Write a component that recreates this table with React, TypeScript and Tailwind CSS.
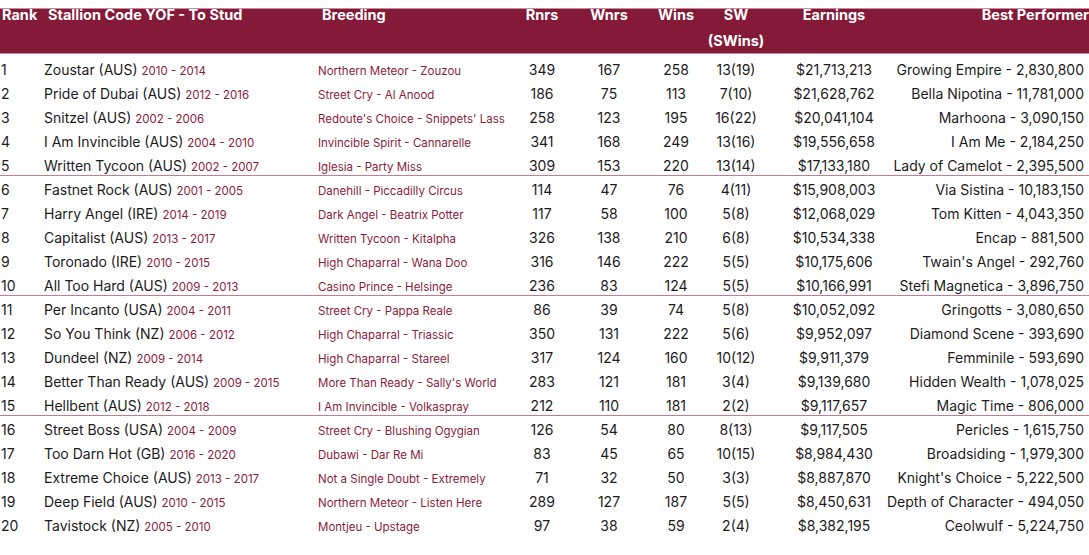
const rows = [
  ['1', 'Zoustar (AUS)', '2010 - 2014', 'Northern Meteor - Zouzou', '349', '167', '258', '13(19)', '$21,713,213', 'Growing Empire - 2,830,800'],
  ['2', 'Pride of Dubai (AUS)', '2012 - 2016', 'Street Cry - Al Anood', '186', '75', '113', '7(10)', '$21,628,762', 'Bella Nipotina - 11,781,000'],
  ['3', 'Snitzel (AUS)', '2002 - 2006', "Redoute's Choice - Snippets' Lass", '258', '123', '195', '16(22)', '$20,041,104', 'Marhoona - 3,090,150'],
  ['4', 'I Am Invincible (AUS)', '2004 - 2010', 'Invincible Spirit - Cannarelle', '341', '168', '249', '13(16)', '$19,556,658', 'I Am Me - 2,184,250'],
  ['5', 'Written Tycoon (AUS)', '2002 - 2007', 'Iglesia - Party Miss', '309', '153', '220', '13(14)', '$17,133,180', 'Lady of Camelot - 2,395,500'],
  ['6', 'Fastnet Rock (AUS)', '2001 - 2005', 'Danehill - Piccadilly Circus', '114', '47', '76', '4(11)', '$15,908,003', 'Via Sistina - 10,183,150'],
  ['7', 'Harry Angel (IRE)', '2014 - 2019', 'Dark Angel - Beatrix Potter', '117', '58', '100', '5(8)', '$12,068,029', 'Tom Kitten - 4,043,350'],
  ['8', 'Capitalist (AUS)', '2013 - 2017', 'Written Tycoon - Kitalpha', '326', '138', '210', '6(8)', '$10,534,338', 'Encap - 881,500'],
  ['9', 'Toronado (IRE)', '2010 - 2015', 'High Chaparral - Wana Doo', '316', '146', '222', '5(5)', '$10,175,606', "Twain's Angel - 292,760"],
  ['10', 'All Too Hard (AUS)', '2009 - 2013', 'Casino Prince - Helsinge', '236', '83', '124', '5(5)', '$10,166,991', 'Stefi Magnetica - 3,896,750'],
  ['11', 'Per Incanto (USA)', '2004 - 2011', 'Street Cry - Pappa Reale', '86', '39', '74', '5(8)', '$10,052,092', 'Gringotts - 3,080,650'],
  ['12', 'So You Think (NZ)', '2006 - 2012', 'High Chaparral - Triassic', '350', '131', '222', '5(6)', '$9,952,097', 'Diamond Scene - 393,690'],
  ['13', 'Dundeel (NZ)', '2009 - 2014', 'High Chaparral - Stareel', '317', '124', '160', '10(12)', '$9,911,379', 'Femminile - 593,690'],
  ['14', 'Better Than Ready (AUS)', '2009 - 2015', "More Than Ready - Sally's World", '283', '121', '181', '3(4)', '$9,139,680', 'Hidden Wealth - 1,078,025'],
  ['15', 'Hellbent (AUS)', '2012 - 2018', 'I Am Invincible - Volkaspray', '212', '110', '181', '2(2)', '$9,117,657', 'Magic Time - 806,000'],
  ['16', 'Street Boss (USA)', '2004 - 2009', 'Street Cry - Blushing Ogygian', '126', '54', '80', '8(13)', '$9,117,505', 'Pericles - 1,615,750'],
  ['17', 'Too Darn Hot (GB)', '2016 - 2020', 'Dubawi - Dar Re Mi', '83', '45', '65', '10(15)', '$8,984,430', 'Broadsiding - 1,979,300'],
  ['18', 'Extreme Choice (AUS)', '2013 - 2017', 'Not a Single Doubt - Extremely', '71', '32', '50', '3(3)', '$8,887,870', "Knight's Choice - 5,222,500"],
  ['19', 'Deep Field (AUS)', '2010 - 2015', 'Northern Meteor - Listen Here', '289', '127', '187', '5(5)', '$8,450,631', 'Depth of Character - 494,050'],
  ['20', 'Tavistock (NZ)', '2005 - 2010', 'Montjeu - Upstage', '97', '38', '59', '2(4)', '$8,382,195', 'Ceolwulf - 5,224,750'],
];

const cols = 'grid grid-cols-[44px_274px_192px_64px_70px_64px_56px_140px_minmax(0,1fr)]';

export default function App() {
  return (
    <div className="w-[1089px] h-[555px] bg-white overflow-hidden font-['Inter',sans-serif] text-[#1c1c1c]">
      <div className="pt-2">
        <div className={`${cols} h-[46px] bg-[#851a38] border-y border-[#c48c9c] text-white font-bold text-[14.5px] leading-[26px]`}>
          <div className="-mt-[7px] pl-[2px]">Rank</div>
          <div className="-mt-[7px] pl-[4px] whitespace-nowrap">Stallion Code YOF - To Stud</div>
          <div className="-mt-[7px] pl-[4px]">Breeding</div>
          <div className="-mt-[7px] text-center">Rnrs</div>
          <div className="-mt-[7px] text-center">Wnrs</div>
          <div className="-mt-[7px] text-center">Wins</div>
          <div className="-mt-[7px] flex flex-col items-center whitespace-nowrap">
            <span>SW</span>
            <span>(SWins)</span>
          </div>
          <div className="-mt-[7px] text-center">Earnings</div>
          <div className="-mt-[7px] flex justify-end whitespace-nowrap">Best Performer</div>
        </div>
      </div>
      <div className="pt-[4px]">
        {rows.map((r, i) => {
          const sep = i % 5 === 4 && i < 19;
          return (
            <div
              key={r[0]}
              className={`${cols} items-baseline text-[14px] leading-[24px] ${sep ? 'h-[22px] mb-[2px] border-b border-[#c47e92]' : 'h-[24px]'}`}
            >
              <div className="pl-[1px]">{r[0]}</div>
              <div className="whitespace-nowrap">
                {r[1]} <span className="text-[11.5px] text-[#8a1c3d]">{r[2]}</span>
              </div>
              <div className="whitespace-nowrap text-[11.5px] text-[#8a1c3d]">{r[3]}</div>
              <div className="text-center">{r[4]}</div>
              <div className="text-center">{r[5]}</div>
              <div className="text-center">{r[6]}</div>
              <div className="text-center">{r[7]}</div>
              <div className="text-center">{r[8]}</div>
              <div className="flex justify-end whitespace-nowrap pr-[5px]">{r[9]}</div>
            </div>
          );
        })}
      </div>
    </div>
  );
}
